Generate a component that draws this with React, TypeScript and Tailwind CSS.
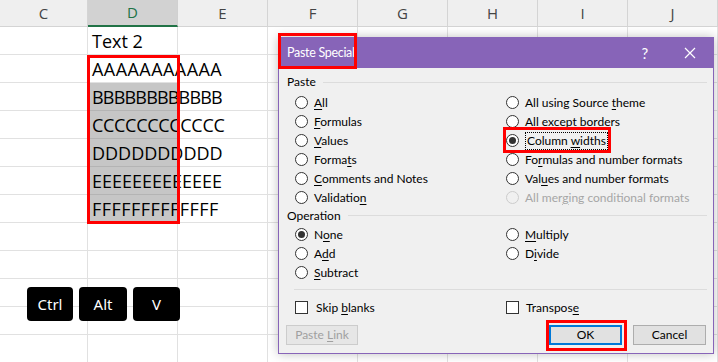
import React from 'react';

const cols = ['C', 'D', 'E', 'F', 'G', 'H', 'I', 'J'];
const colWidths = ['w-[88px]', 'w-[90px]', 'w-[90px]', 'w-[90px]', 'w-[90px]', 'w-[90px]', 'w-[90px]', 'w-[90px]'];

const cellText = ['Text 2', 'AAAAAAAAAAA', 'BBBBBBBBBBBB', 'CCCCCCCCCCCC', 'DDDDDDDDDD', 'EEEEEEEEEEEEE', 'FFFFFFFFFFFFF'];
// tracking per row so the overflowing strings end where the sheet shows them
const cellTracking = ['', 'tracking-[0.45px]', 'tracking-[-0.8px]', 'tracking-[-0.3px]', '', '', 'tracking-[0.45px]'];

const Acc = ({ text, at }: { text: string; at: number }) => (
  <span className="whitespace-nowrap">
    {text.slice(0, at)}
    <span className="underline underline-offset-2">{text.charAt(at)}</span>
    {text.slice(at + 1)}
  </span>
);

const Radio = ({ checked = false, disabled = false }: { checked?: boolean; disabled?: boolean }) => (
  <span
    className={`flex h-[13px] w-[13px] shrink-0 items-center justify-center rounded-full border ${
      disabled ? 'border-[#cccccc] bg-[#f0f0f0]' : 'border-[#333333] bg-white'
    }`}
  >
    {checked && <span className="h-[7px] w-[7px] rounded-full bg-[#333333]" />}
  </span>
);

const Option = ({
  text,
  at,
  checked,
  disabled,
  focus,
}: {
  text: string;
  at: number;
  checked?: boolean;
  disabled?: boolean;
  focus?: boolean;
}) => (
  <div className="flex h-[19px] items-center gap-[6px]">
    <Radio checked={checked} disabled={disabled} />
    <span
      className={`${disabled ? 'text-[#a6a6a6]' : 'text-black'} ${
        focus ? 'border border-dotted border-black px-px leading-[16px]' : ''
      }`}
    >
      <Acc text={text} at={at} />
    </span>
  </div>
);

const GroupHeader = ({ label, className }: { label: string; className: string }) => (
  <div className={`flex items-center pl-[8px] pr-[6px] ${className}`}>
    <span>{label}</span>
    <span className="ml-[7px] h-px flex-1 bg-[#dcdcdc]" />
  </div>
);

const Key = ({ label, w }: { label: string; w: string }) => (
  <div className={`flex h-[34px] items-center justify-center rounded-[4px] bg-black text-[15px] text-white ${w}`}>
    {label}
  </div>
);

export default function App() {
  return (
    <div className="relative h-[362px] w-[718px] overflow-hidden bg-white font-['Open_Sans',sans-serif]">
      {/* sheet */}
      <div className="flex h-[27px]">
        {cols.map((c, i) => (
          <div
            key={c}
            className={`flex items-center justify-center border-r text-[15px] ${colWidths[i]} ${
              c === 'D'
                ? 'border-b-2 border-r-[#d0d0d0] border-b-[#217346] bg-[#d2d2d2] text-[#217346]'
                : 'border-b border-[#d4d4d4] bg-[#efefef] text-[#444444]'
            }`}
          >
            {c}
          </div>
        ))}
      </div>
      {Array.from({ length: 12 }).map((_, r) => (
        <div key={r} className="flex h-[28px]">
          {cols.map((c, i) => {
            const txt = c === 'D' ? cellText[r] : undefined;
            const selected = c === 'D' && r >= 2 && r <= 6;
            return (
              <div
                key={c}
                className={`flex items-center border-b border-r border-[#e1e1e1] pl-[4px] text-[18px] leading-none text-black ${
                  colWidths[i]
                } ${selected ? 'border-b-[#b4b4b4] bg-[#c6c6c6]' : ''}`}
              >
                {txt && <span className={`whitespace-nowrap ${cellTracking[r] ?? ''}`}>{txt}</span>}
              </div>
            );
          })}
        </div>
      ))}

      {/* red box on D column */}
      <div className="absolute left-[87px] top-[55px] h-[169px] w-[93px] border-[3px] border-[#ff0000]" />

      {/* keys */}
      <div className="absolute left-[27px] top-[287px] flex gap-[6px] font-['Noto_Sans',sans-serif]">
        <Key label="Ctrl" w="w-[46px]" />
        <Key label="Alt" w="w-[48px]" />
        <Key label="V" w="w-[47px]" />
      </div>

      {/* dialog */}
      <div className="absolute left-[278px] top-[37px] flex h-[317px] w-[436px] flex-col border border-[#8764b8] bg-[#f0f0f0] text-[12px] text-black shadow-[0_0_10px_rgba(0,0,0,0.25)] font-['Lato',sans-serif]">
        <div className="flex h-[30px] items-center bg-[#8764b8] pl-[8px] text-[12.5px] tracking-[-0.3px] text-white">
          <span className="flex-1">Paste Special</span>
          <span className="mr-[36px] text-[15px]">?</span>
          <svg width="12" height="12" viewBox="0 0 12 12" className="mr-[17px]">
            <path d="M1 1 L11 11 M11 1 L1 11" stroke="white" strokeWidth="1.2" />
          </svg>
        </div>

        <GroupHeader label="Paste" className="mt-[5px] h-[18px]" />
        <div className="mt-[2px] grid grid-cols-[211px_1fr] pl-[16px]">
          <div className="flex flex-col">
            <Option text="All" at={0} />
            <Option text="Formulas" at={0} />
            <Option text="Values" at={0} />
            <Option text="Formats" at={5} />
            <Option text="Comments and Notes" at={0} />
            <Option text="Validation" at={9} />
          </div>
          <div className="flex flex-col">
            <Option text="All using Source theme" at={17} />
            <Option text="All except borders" at={5} />
            <Option text="Column widths" at={7} checked focus />
            <Option text="Formulas and number formats" at={2} />
            <Option text="Values and number formats" at={3} />
            <Option text="All merging conditional formats" at={7} disabled />
          </div>
        </div>

        <GroupHeader label="Operation" className="h-[17px]" />
        <div className="mt-[1px] grid grid-cols-[211px_1fr] pl-[16px]">
          <div className="flex flex-col">
            <Option text="None" at={1} checked />
            <Option text="Add" at={1} />
            <Option text="Subtract" at={0} />
          </div>
          <div className="flex flex-col">
            <Option text="Multiply" at={0} />
            <Option text="Divide" at={1} />
          </div>
        </div>

        <div className="ml-[15px] mr-[6px] mt-[7px] h-px bg-[#dcdcdc]" />

        <div className="mt-[8px] grid h-[19px] grid-cols-[211px_1fr] items-center pl-[16px]">
          <div className="flex items-center gap-[8px]">
            <span className="h-[13px] w-[13px] border border-[#333333] bg-white" />
            <Acc text="Skip blanks" at={5} />
          </div>
          <div className="flex items-center gap-[7px]">
            <span className="h-[13px] w-[13px] border border-[#333333] bg-white" />
            <Acc text="Transpose" at={8} />
          </div>
        </div>

        <div className="mt-[8px] flex h-[20px] pl-[7px] pr-[7px]">
          <div className="flex w-[72px] items-center justify-center border border-[#cccccc] bg-[#e6e6e6] text-[#a0a0a0]">
            <Acc text="Paste Link" at={6} />
          </div>
          <div className="flex-1" />
          <div className="flex w-[73px] items-center justify-center border-2 border-[#0078d7] bg-[#e1e1e1]">
            OK
          </div>
          <div className="ml-[11px] flex w-[73px] items-center justify-center border border-[#adadad] bg-[#e1e1e1]">
            Cancel
          </div>
        </div>
      </div>

      {/* red highlights over dialog */}
      <div className="absolute left-[278px] top-[33px] h-[36px] w-[79px] border-[3px] border-[#ff0000]" />
      <div className="absolute left-[503px] top-[127px] h-[26px] w-[108px] border-[3px] border-[#ff0000]" />
      <div className="absolute left-[546px] top-[320px] h-[31px] w-[81px] border-[3px] border-[#ff0000]" />
    </div>
  );
}
